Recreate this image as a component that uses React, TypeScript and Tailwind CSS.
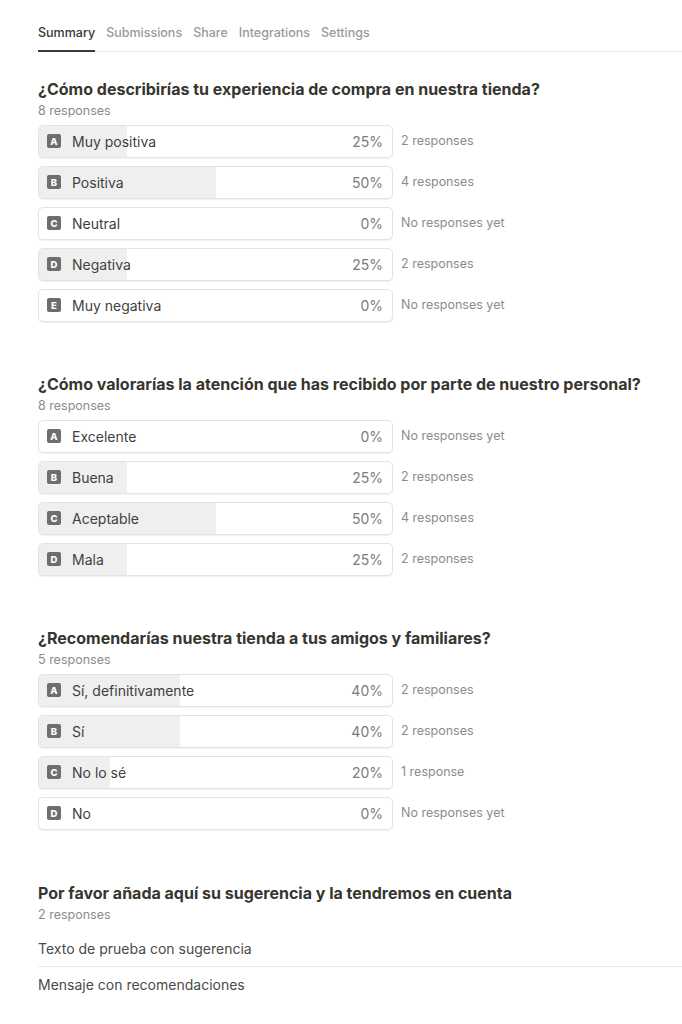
import React from 'react';

type Option = { letter: string; label: string; pct: number; count: number };
type Question = { title: string; responses: number; options: Option[] };

const questions: Question[] = [
  {
    title: '¿Cómo describirías tu experiencia de compra en nuestra tienda?',
    responses: 8,
    options: [
      { letter: 'A', label: 'Muy positiva', pct: 25, count: 2 },
      { letter: 'B', label: 'Positiva', pct: 50, count: 4 },
      { letter: 'C', label: 'Neutral', pct: 0, count: 0 },
      { letter: 'D', label: 'Negativa', pct: 25, count: 2 },
      { letter: 'E', label: 'Muy negativa', pct: 0, count: 0 },
    ],
  },
  {
    title: '¿Cómo valorarías la atención que has recibido por parte de nuestro personal?',
    responses: 8,
    options: [
      { letter: 'A', label: 'Excelente', pct: 0, count: 0 },
      { letter: 'B', label: 'Buena', pct: 25, count: 2 },
      { letter: 'C', label: 'Aceptable', pct: 50, count: 4 },
      { letter: 'D', label: 'Mala', pct: 25, count: 2 },
    ],
  },
  {
    title: '¿Recomendarías nuestra tienda a tus amigos y familiares?',
    responses: 5,
    options: [
      { letter: 'A', label: 'Sí, definitivamente', pct: 40, count: 2 },
      { letter: 'B', label: 'Sí', pct: 40, count: 2 },
      { letter: 'C', label: 'No lo sé', pct: 20, count: 1 },
      { letter: 'D', label: 'No', pct: 0, count: 0 },
    ],
  },
];

const tabs = ['Summary', 'Submissions', 'Share', 'Integrations', 'Settings'];

function countText(n: number) {
  if (n === 0) return 'No responses yet';
  return n === 1 ? '1 response' : `${n} responses`;
}

function OptionRow({ option }: { option: Option }) {
  return (
    <div className="flex items-center gap-2">
      <div className="relative h-[33px] w-[355px] overflow-hidden rounded-[5px] border border-[#e3e3e3] bg-white shadow-[0_1px_1px_rgba(0,0,0,0.06)]">
        {/* fill bar */}
        <div className="absolute inset-y-0 left-0 bg-[#efefef]" style={{ width: `${option.pct}%` }} />
        <div className="relative flex h-full items-center pl-[8px] pr-[9px]">
          <span className="flex h-[14px] w-[14px] items-center justify-center rounded-[2px] bg-[#6e6e6e] text-[9.5px] font-extrabold leading-none text-white">
            {option.letter}
          </span>
          <span className="ml-[11px] text-[14px] text-[#3f3f3f]">{option.label}</span>
          <span className="ml-auto text-[14px] text-[#7b7b7b]">{option.pct}%</span>
        </div>
      </div>
      <span className="text-[12.5px] text-[#8c8c8c]">{countText(option.count)}</span>
    </div>
  );
}

export default function App() {
  return (
    <div className="min-h-screen bg-white pl-[38px] font-['Inter',sans-serif]">
      {/* Tabs */}
      <div className="flex gap-[11px] border-b border-[#ececec] pt-[24px]">
        {tabs.map((t, i) => (
          <div
            key={t}
            className={
              i === 0
                ? '-mb-px border-b-2 border-[#3a3a3a] pb-[7px] text-[12.5px] font-medium text-[#37352f]'
                : '-mb-px border-b-2 border-transparent pb-[7px] text-[12.5px] font-medium text-[#9a9a9a]'
            }
          >
            {t}
          </div>
        ))}
      </div>

      <div className="pt-[27px]">
        {questions.map((q) => (
          <div key={q.title} className="mb-[52px]">
            <h2 className="text-[16px] font-bold leading-[20px] text-[#37352f]">{q.title}</h2>
            <p className="mt-[3px] text-[12.5px] leading-[18px] text-[#8c8c8c]">{q.responses} responses</p>
            <div className="mt-[5px] flex flex-col gap-[8px]">
              {q.options.map((o) => (
                <OptionRow key={o.letter} option={o} />
              ))}
            </div>
          </div>
        ))}

        {/* Text question */}
        <div className="pt-[1px]">
          <h2 className="text-[16px] font-bold leading-[20px] text-[#37352f]">
            Por favor añada aquí su sugerencia y la tendremos en cuenta
          </h2>
          <p className="mt-[3px] text-[12.5px] leading-[18px] text-[#8c8c8c]">2 responses</p>
          <div className="mt-[7px]">
            <div className="border-b border-[#ececec] py-[7px] text-[14px] text-[#4a4a4a]">Texto de prueba con sugerencia</div>
            <div className="py-[7px] text-[14px] text-[#4a4a4a]">Mensaje con recomendaciones</div>
          </div>
        </div>
      </div>
    </div>
  );
}
